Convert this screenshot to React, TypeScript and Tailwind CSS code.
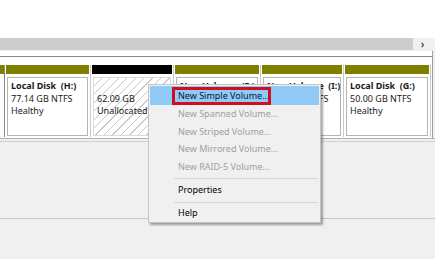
import React from "react";

type Cell = {
  w: string;
  bar: string;
  lines: string[];
  hatch?: boolean;
};

const cells: Cell[] = [
  { w: "w-[86px]", bar: "bg-[#808000]", lines: ["Local Disk  (H:)", "77.14 GB NTFS", "Healthy"] },
  { w: "w-[83px]", bar: "bg-black", lines: ["", "62.09 GB", "Unallocated"], hatch: true },
  { w: "w-[87px]", bar: "bg-[#808000]", lines: ["New Volume  (E:)", "40.00 GB NTFS", "Healthy"] },
  { w: "w-[83px]", bar: "bg-[#808000]", lines: ["New Volume  (I:)", "60.00 GB NTFS", "Healthy"] },
  { w: "w-[87px]", bar: "bg-[#808000]", lines: ["Local Disk  (G:)", "50.00 GB NTFS", "Healthy"] },
];

function DiskCell({ cell }: { cell: Cell }) {
  return (
    <div className={`${cell.w} shrink-0 flex flex-col border-r border-[#c8c8c8] bg-white`}>
      <div className={`h-[9px] mx-[1px] ${cell.bar}`} />
      <div
        className={`flex-1 mt-[3px] mx-[2px] mb-[1px] border border-[#b4b4b4] overflow-hidden whitespace-pre pl-[3px] pt-[2px] text-[9px] leading-[12.5px] text-[#1a1a1a] ${
          cell.hatch
            ? "border-[#dcdcdc] bg-[repeating-linear-gradient(135deg,#ffffff_0px,#ffffff_5px,#c9c9c9_5px,#c9c9c9_6px)] pl-[1px]"
            : "bg-white"
        }`}
      >
        <div className="font-bold h-[12.5px]">{cell.lines[0]}</div>
        <div className="h-[12.5px]">{cell.lines[1]}</div>
        <div className="h-[12.5px]">{cell.lines[2]}</div>
      </div>
    </div>
  );
}

const items = [
  { label: "New Spanned Volume...", disabled: true },
  { label: "New Striped Volume...", disabled: true },
  { label: "New Mirrored Volume...", disabled: true },
  { label: "New RAID-5 Volume...", disabled: true },
];

function Menu() {
  return (
    <div className="absolute left-[148px] top-[84px] w-[173px] bg-[#f0f0f0] border border-[#c4c4c4] p-[1px] shadow-[2px_2px_2px_rgba(0,0,0,0.35)] text-[9px]">
      <div className="relative h-[19px] bg-[#91c9f7] flex items-center pl-[28px] text-[#0a1530]">
        New Simple Volume...
        <div className="absolute left-[22px] top-[1px] w-[99px] h-[18px] border-[3px] border-[#cc1020]" />
      </div>
      {items.map((it) => (
        <div key={it.label} className="h-[17.5px] flex items-center pl-[28px] text-[#a0a0a0]">
          {it.label}
        </div>
      ))}
      <div className="h-[6px] flex items-center ml-[24px] mr-[1px]">
        <div className="h-[1px] w-full bg-[#d7d7d7]" />
      </div>
      <div className="h-[18px] flex items-center pl-[28px] text-black">Properties</div>
      <div className="h-[6px] flex items-center ml-[24px] mr-[1px]">
        <div className="h-[1px] w-full bg-[#d7d7d7]" />
      </div>
      <div className="h-[16px] flex items-center pl-[28px] text-black">Help</div>
    </div>
  );
}

export default function App() {
  return (
    <div
      className="relative w-[435px] h-[259px] overflow-hidden bg-[#f0f0f0] flex flex-col"
      style={{ fontFamily: '"Noto Sans", "Open Sans", sans-serif' }}
    >
      <div className="h-[38px] bg-white shrink-0" />
      <div className="h-[13px] shrink-0 flex bg-[#f0f0f0]">
        <div className="w-[413px] h-[12px] bg-[#cdcdcd]" />
        <div className="flex-1 flex items-center justify-center text-[10px] font-bold text-[#555] pr-[3px]">
          ›
        </div>
      </div>
      <div className="h-[5px] shrink-0 bg-white w-[433px] border-r border-[#a0a0a0]" />
      <div className="h-[1px] shrink-0 w-[433px] bg-[#8a8a8a]" />
      <div className="h-[81px] shrink-0 w-[433px] bg-white border-r border-[#a0a0a0] flex pt-[8px] pb-[1px]">
        <div className="w-[5px] shrink-0 flex flex-col border-r border-[#8a8a8a]">
          <div className="h-[9px] bg-[#808000]" />
        </div>
        {cells.map((c, i) => (
          <DiskCell key={i} cell={c} />
        ))}
      </div>
      <div className="h-[1px] shrink-0 bg-[#b0b0b0]" />
      <div className="h-[2px] shrink-0 bg-[#f0f0f0]" />
      <div className="h-[1px] shrink-0 bg-[#d0d0d0]" />
      <div className="h-[76px] shrink-0 bg-[#f0f0f0]" />
      <div className="h-[1px] shrink-0 bg-[#c8c8c8]" />
      <div className="flex-1 bg-[#f0f0f0]" />
      <Menu />
    </div>
  );
}
